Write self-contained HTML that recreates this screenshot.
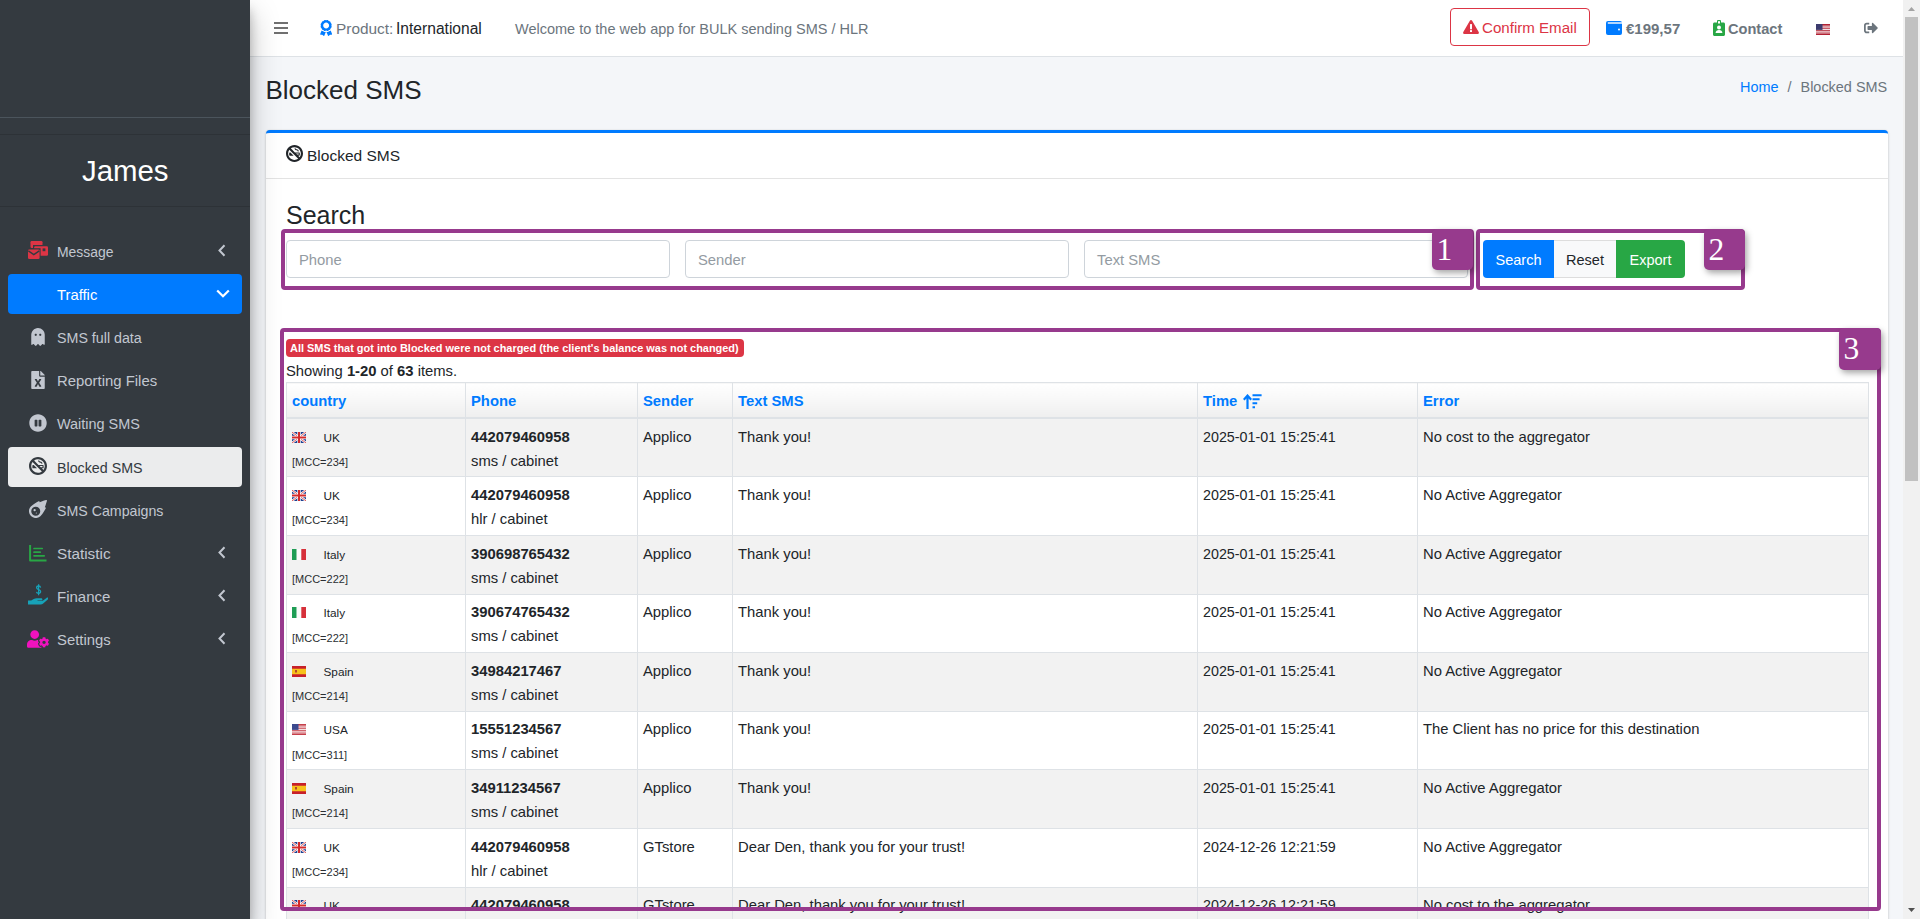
<!DOCTYPE html>
<html><head><meta charset="utf-8">
<style>
*{box-sizing:border-box;margin:0;padding:0}
html,body{width:1920px;height:919px;overflow:hidden}
body{font-family:"Liberation Sans",sans-serif;background:#f4f6f9;color:#212529;position:relative;font-size:14.8px}
.abs{position:absolute}
.nw{white-space:nowrap}
/* sidebar */
#sb{position:absolute;left:0;top:0;width:250px;height:919px;background:#343a40;box-shadow:0 14px 28px rgba(0,0,0,.25),0 10px 10px rgba(0,0,0,.22);z-index:5}
.sbline{position:absolute;left:0;width:250px;height:1px}
.nav{position:absolute;left:8px;width:234px;height:40px;border-radius:4px;color:#c2c7d0;font-size:14.2px}
.nav .ic{position:absolute;left:20px;top:10px;width:20px;height:20px}
.nav .tx{position:absolute;left:49px;top:12px;white-space:nowrap;line-height:18px}
.nav .ar{position:absolute;left:210px;top:13px;width:8px;height:13px}
/* header */
#hd{position:absolute;left:250px;top:0;width:1653px;height:57px;background:#fff;border-bottom:1px solid #dee2e6;z-index:3}
/* scrollbar */
#scr{position:absolute;left:1903px;top:0;width:17px;height:919px;background:#f1f1f1;z-index:10}
#thumb{position:absolute;left:2px;top:17px;width:13px;height:464px;background:#c1c1c1}
/* card */
#card{position:absolute;left:266px;top:130px;width:1622px;height:900px;background:#fff;border-radius:4px;border-top:3px solid #007bff;box-shadow:0 0 1px rgba(0,0,0,.125),0 1px 3px rgba(0,0,0,.2)}
.inp{position:absolute;top:240px;height:38px;width:384px;border:1px solid #ced4da;border-radius:4px;background:#fff;color:#939ba2;font-size:14.8px;padding:10.5px 0 0 12px}
.btn{position:absolute;top:240px;height:38px;font-size:14.5px;padding-top:12px;text-align:center}
/* table */
#tbl{position:absolute;left:286px;top:382px;border-collapse:collapse;table-layout:fixed;width:1582px;font-size:14.8px}
#tbl th,#tbl td{border:1px solid #dee2e6;padding:4.8px 5px;vertical-align:top;text-align:left;line-height:24px}
#tbl th{color:#007bff;font-weight:700;background:linear-gradient(to bottom,#fff 0%,#efefef 100%);border-bottom:2px solid #dee2e6;height:35.6px;padding-top:5.8px;padding-bottom:3.8px}
#tbl td{height:58.6px;padding-top:5.5px;padding-bottom:4.1px}
#tbl tr.s td{background:#f2f2f2}
#tbl tr.r1 td{height:57px;padding-bottom:3.9px}
.cty{font-size:11.8px;line-height:24px;position:relative;top:1px;height:24px}
.cty svg{vertical-align:-1px;margin-right:17.5px}
.mcc{font-size:11px;line-height:24px;position:relative;top:1.5px;height:24px;color:#2b2f33}
.tm{font-size:14.3px}
/* annotations */
.box{position:absolute;border:4px solid #973a8d;border-radius:4px;z-index:20}
.lab{position:absolute;width:41px;height:41px;background:#973a8d;border-radius:5px;color:#fff;font-family:"Liberation Serif",serif;font-size:31.5px;line-height:41.5px;padding-left:4.5px;box-shadow:2px 3px 6px rgba(0,0,0,.35);z-index:21}
</style></head>
<body>

<!-- SIDEBAR -->
<div id="sb">
  <div class="sbline" style="top:117px;background:#4b545c"></div>
  <div class="sbline" style="top:134px;background:#2d3237"></div>
  <div class="abs nw" style="left:82px;top:154px;color:#fff;font-size:29.4px;line-height:34px">James</div>
  <div class="sbline" style="top:206px;background:#2d3237"></div>

  <!-- nav items -->
  <div class="nav" style="top:231px">
    <svg class="abs" style="left:20px;top:10px" width="20" height="18" viewBox="0 0 20 18">
      <rect x="2.5" y="0" width="12" height="7" rx="1.2" fill="#dc3545"/>
      <rect x="5" y="4" width="16" height="12" fill="#343a40"/>
      <rect x="6.2" y="5.2" width="13.8" height="9.6" rx="1.2" fill="#dc3545"/>
      <rect x="14.6" y="7.4" width="2.8" height="2.8" fill="#343a40"/>
      <rect x="-1" y="7.2" width="13.6" height="12" fill="#343a40"/>
      <rect x="0" y="8.4" width="11.6" height="9.6" rx="1.2" fill="#dc3545"/>
      <polyline points="0.3,9.8 5.8,13.6 11.3,9.8" fill="none" stroke="#343a40" stroke-width="1.4"/>
    </svg>
    <div class="tx" style="font-size:13.95px">Message</div>
    <svg class="ar" style="left:210px" viewBox="0 0 8 13"><polyline points="6.5,1.2 1.5,6.5 6.5,11.8" fill="none" stroke="#c2c7d0" stroke-width="2"/></svg>
  </div>
  <div class="nav" style="top:274px;background:#007bff;color:#fff">
    <div class="tx" style="font-size:14.8px">Traffic</div>
    <svg class="abs" style="left:208px;top:15px" width="14" height="9" viewBox="0 0 14 9"><polyline points="1.2,1.5 7,7.2 12.8,1.5" fill="none" stroke="#fff" stroke-width="2.2"/></svg>
  </div>
  <div class="nav" style="top:317px">
    <svg class="abs" style="left:23px;top:11px" width="14" height="18" viewBox="0 0 384 512"><path fill="#c2c7d0" d="M186.1.09C81.01 3.24 0 94.92 0 200.05v263.92c0 14.26 17.23 21.39 27.31 11.31l24.92-18.53c6.66-4.95 16-3.99 21.51 2.21l42.95 48.35c6.25 6.25 16.38 6.25 22.63 0l40.72-45.85c6.37-7.17 17.56-7.17 23.92 0l40.72 45.85c6.25 6.25 16.38 6.25 22.63 0l42.95-48.35c5.51-6.2 14.85-7.17 21.51-2.21l24.92 18.53c10.08 10.08 27.31 2.94 27.31-11.31V192C384 84 294.83-3.17 186.1.09zM128 224c-17.67 0-32-14.33-32-32s14.33-32 32-32 32 14.33 32 32-14.33 32-32 32zm128 0c-17.67 0-32-14.33-32-32s14.33-32 32-32 32 14.33 32 32-14.33 32-32 32z"/></svg>
    <div class="tx" style="font-size:14.25px">SMS full data</div>
  </div>
  <div class="nav" style="top:360px">
    <svg class="abs" style="left:23px;top:11px" width="14" height="18" viewBox="0 0 384 512"><path fill="#c2c7d0" d="M224 136V0H24C10.7 0 0 10.7 0 24v464c0 13.3 10.7 24 24 24h336c13.3 0 24-10.7 24-24V160H248c-13.2 0-24-10.8-24-24zm60.1 106.5L224 336l60.1 93.5c5.1 8-.6 18.5-10.1 18.5h-34.9c-4.4 0-8.5-2.4-10.6-6.3C208.9 405.5 192 373 192 373c-6.4 14.8-10 20-36.6 68.8-2.1 3.9-6.1 6.3-10.5 6.3H110c-9.5 0-15.2-10.5-10.1-18.5l60.3-93.5-60.3-93.5c-5.2-8 .6-18.5 10.1-18.5h34.8c4.4 0 8.5 2.4 10.6 6.3 26.1 48.8 20 33.6 36.6 68.5 0 0 6.1-11.7 36.6-68.5 2.1-3.9 6.2-6.3 10.6-6.3H274c9.5-.1 15.2 10.4 10.1 18.4zM384 121.9v6.1H256V0h6.1c6.4 0 12.5 2.5 17 7l97.9 98c4.5 4.5 7 10.6 7 16.9z"/></svg>
    <div class="tx" style="font-size:14.9px">Reporting Files</div>
  </div>
  <div class="nav" style="top:403px">
    <svg class="abs" style="left:21px;top:11px" width="18" height="18" viewBox="0 0 512 512"><path fill="#c2c7d0" d="M256 8C119 8 8 119 8 256s111 248 248 248 248-111 248-248S393 8 256 8zm-16 328c0 8.8-7.2 16-16 16h-48c-8.8 0-16-7.2-16-16V176c0-8.8 7.2-16 16-16h48c8.8 0 16 7.2 16 16v160zm112 0c0 8.8-7.2 16-16 16h-48c-8.8 0-16-7.2-16-16V176c0-8.8 7.2-16 16-16h48c8.8 0 16 7.2 16 16v160z"/></svg>
    <div class="tx" style="font-size:14.45px">Waiting SMS</div>
  </div>
  <div class="nav" style="top:447px;background:#ebeced;color:#343a40">
    <svg class="abs" style="left:21px;top:10px" width="18" height="18" viewBox="0 0 512 512"><path fill="#343a40" d="M96 304c0 8.8 7.2 16 16 16h117.5l-96-96H112c-8.8 0-16 7.2-16 16v64zM256 0C114.6 0 0 114.6 0 256s114.6 256 256 256 256-114.6 256-256S397.4 0 256 0zm0 448c-105.9 0-192-86.1-192-192 0-41.4 13.3-79.700 35.7-111.1l267.4 267.4C335.7 434.7 297.4 448 256 448zm45.2-192H384v32h-50.8l-32-32zm111.1 111.1L365.2 320H400c8.8 0 16-7.2 16-16v-64c0-8.8-7.2-16-16-16H269.2L144.9 99.7C176.3 77.3 214.6 64 256 64c105.9 0 192 86.1 192 192 0 41.4-13.3 79.7-35.7 111.1zM320.6 128c-15.6 0-28.6-11.2-31.4-25.9-.7-3.6-4-6.1-7.7-6.1h-16.2c-5 0-8.7 4.5-8 9.4 4.6 30.9 31.2 54.6 63.3 54.6 15.6 0 28.6 11.2 31.4 25.9.7 3.6 4 6.1 7.7 6.1h16.2c5 0 8.7-4.5 8-9.4-4.6-30.9-31.2-54.6-63.3-54.6z"/></svg>
    <div class="tx" style="font-size:14.25px">Blocked SMS</div>
  </div>
  <div class="nav" style="top:490px">
    <svg class="abs" style="left:21px;top:10px" width="18" height="18" viewBox="0 0 512 512"><path fill="#c2c7d0" d="M511.328 20.8c-11.6 38.7-34.3 111.7-61.3 187.7 7 2.1 13.4 4 18.6 5.6a16.06 16.06 0 0 1 9.5 22.9c-22.1 42.3-82.7 152.8-142.5 214.4-1 1.1-2 2.5-3 3.5A194.83 194.83 0 1 1 57.085 179.41c1-1 2.4-2 3.5-3 61.6-59.9 172-120.4 214.4-142.5a16.06 16.06 0 0 1 22.9 9.5c1.6 5.1 3.5 11.6 5.6 18.6C379.35 35 452.43 12.3 491.13.71A16.18 16.18 0 0 1 511.328 20.8ZM319.951 320A127.98 127.98 0 1 0 191.97 448 127.98 127.98 0 0 0 319.951 320Zm-127.98-32a32 32 0 1 1-32-32 31.96 31.96 0 0 1 32 32Zm32 80a16 16 0 1 1-16-16 16.05 16.05 0 0 1 16 16Z"/></svg>
    <div class="tx" style="font-size:14.2px">SMS Campaigns</div>
  </div>
  <div class="nav" style="top:533px">
    <svg class="abs" style="left:21px;top:12px" width="18" height="17" viewBox="0 0 18 17">
      <path d="M1.1 0 V15.6 H17.5" fill="none" stroke="#28a745" stroke-width="2" stroke-linejoin="round"/>
      <path d="M5 3.5 H13.2 M5 7.2 H11.2 M5 10.8 H15.2" fill="none" stroke="#28a745" stroke-width="1.7" stroke-linecap="round"/>
    </svg>
    <div class="tx" style="font-size:15.3px">Statistic</div>
    <svg class="ar" style="left:210px" viewBox="0 0 8 13"><polyline points="6.5,1.2 1.5,6.5 6.5,11.8" fill="none" stroke="#c2c7d0" stroke-width="2"/></svg>
  </div>
  <div class="nav" style="top:576px">
    <svg class="abs" style="left:20px;top:7px" width="20" height="22" viewBox="0 0 20 22">
      <path d="M10.6 1.2 V12.2" stroke="#17a2b8" stroke-width="1.2"/>
      <path d="M12.6 4.6 C12.4 3.5 11.6 3 10.6 3 C9.4 3 8.6 3.7 8.6 4.8 C8.6 7 12.6 6.2 12.6 8.6 C12.6 9.8 11.7 10.4 10.6 10.4 C9.5 10.4 8.7 9.8 8.5 8.8" fill="none" stroke="#17a2b8" stroke-width="1.3"/>
      <path fill="#17a2b8" d="M0 17.6 h3.2 l2.5-1.6 c1-.6 2-.8 3-.8 h4.3 c.9 0 1.4.6 1.4 1.2 0 .7-.6 1.2-1.4 1.2 H9.5 v.5 h3.8 c.8 0 1.5-.3 2.1-.8 l3.1-2.4 c.6-.4 1.3-.4 1.6.1 .3.5.1 1.2-.3 1.5 l-4.6 4 c-.7.6-1.6 1-2.5 1 H0 Z"/>
    </svg>
    <div class="tx" style="font-size:15px">Finance</div>
    <svg class="ar" style="left:210px" viewBox="0 0 8 13"><polyline points="6.5,1.2 1.5,6.5 6.5,11.8" fill="none" stroke="#c2c7d0" stroke-width="2"/></svg>
  </div>
  <div class="nav" style="top:619px">
    <svg class="abs" style="left:19px;top:11px" width="22" height="18" viewBox="0 0 640 512"><path fill="#f012be" d="M610.5 373.3c2.6-14.1 2.6-28.5 0-42.6l25.8-14.9c3-1.7 4.3-5.2 3.3-8.5-6.7-21.6-18.2-41.2-33.2-57.4-2.3-2.5-6-3.1-9-1.4l-25.8 14.9c-10.9-9.3-23.4-16.5-36.9-21.3v-29.8c0-3.4-2.4-6.4-5.7-7.1-22.3-5-45-4.8-66.2 0-3.3.7-5.7 3.7-5.7 7.1v29.8c-13.5 4.8-26 12-36.9 21.3l-25.8-14.9c-2.9-1.7-6.7-1.1-9 1.4-15 16.2-26.5 35.8-33.2 57.4-1 3.3.4 6.8 3.3 8.5l25.8 14.9c-2.6 14.1-2.6 28.5 0 42.6l-25.8 14.9c-3 1.7-4.3 5.2-3.3 8.5 6.7 21.6 18.2 41.1 33.2 57.4 2.3 2.5 6 3.1 9 1.4l25.8-14.9c10.9 9.3 23.4 16.5 36.9 21.3v29.8c0 3.4 2.4 6.4 5.7 7.1 22.3 5 45 4.8 66.2 0 3.3-.7 5.7-3.7 5.7-7.1v-29.8c13.5-4.8 26-12 36.9-21.3l25.8 14.9c2.9 1.7 6.7 1.1 9-1.4 15-16.2 26.5-35.8 33.2-57.4 1-3.3-.4-6.8-3.300-8.5l-25.8-14.9zM496 400.5c-26.8 0-48.5-21.8-48.5-48.5s21.8-48.5 48.5-48.5 48.5 21.8 48.5 48.5-21.7 48.5-48.5 48.5zM224 256c70.7 0 128-57.3 128-128S294.7 0 224 0 96 57.3 96 128s57.3 128 128 128zm201.2 226.5c-2.3-1.2-4.6-2.6-6.8-3.9l-7.9 4.6c-6 3.4-12.8 5.3-19.6 5.3-10.9 0-21.4-4.6-28.9-12.6-18.3-19.8-32.3-43.9-40.2-69.6-5.5-17.7 1.9-36.4 17.9-45.7l7.9-4.6c-.1-2.6-.1-5.2 0-7.8l-7.9-4.6c-16-9.2-23.4-28-17.9-45.7.9-2.9 2.2-5.8 3.2-8.7-3.8-.3-7.5-1.2-11.4-1.2h-16.7c-22.2 10.2-46.9 16-72.9 16s-50.6-5.8-72.9-16h-16.7C60.2 288 0 348.2 0 422.4V464c0 26.5 21.5 48 48 48h352c12.2 0 23.2-4.8 31.7-12.5l-6.5-3z"/></svg>
    <div class="tx" style="font-size:14.85px">Settings</div>
    <svg class="ar" style="left:210px" viewBox="0 0 8 13"><polyline points="6.5,1.2 1.5,6.5 6.5,11.8" fill="none" stroke="#c2c7d0" stroke-width="2"/></svg>
  </div>
</div>

<!-- HEADER -->
<div id="hd">
  <svg class="abs" style="left:24px;top:21px" width="14" height="14" viewBox="0 0 14 14"><path d="M0 2H14M0 7H14M0 12H14" stroke="#707070" stroke-width="2"/></svg>
  <svg class="abs" style="left:70px;top:20px" width="12.3" height="16" viewBox="0 0 384 512"><path fill="#007bff" d="M97.12 362.63c-8.69-8.69-4.16-6.24-25.12-11.85-9.51-2.55-17.870-7.45-25.43-13.32L1.2 448.7c-4.39 10.77 3.81 22.47 15.43 22.03l52.69-2.01L105.56 507c8 8.44 22.04 5.81 26.43-4.96l52.05-127.62c-10.84 6.04-22.87 9.58-35.31 9.58-19.5 0-37.82-7.59-51.61-21.37zM382.8 448.7l-45.37-111.24c-7.56 5.88-15.92 10.77-25.43 13.32-21.07 5.64-16.45 3.18-25.12 11.85-13.79 13.78-32.12 21.37-51.62 21.37-12.44 0-24.47-3.55-35.31-9.58L252 502.04c4.39 10.77 18.44 13.4 26.43 4.96l36.25-38.28 52.69 2.01c11.62.44 19.82-11.27 15.43-22.03zM263 340c15.28-15.55 17.03-14.21 38.79-20.14 13.89-3.79 24.75-14.84 28.47-28.98 7.48-28.4 5.54-24.97 25.95-45.75 10.17-10.35 14.14-25.44 10.42-39.58-7.47-28.38-7.48-24.42 0-52.83 3.72-14.14-.25-29.23-10.42-39.58-20.41-20.78-18.47-17.36-25.95-45.75-3.72-14.14-14.58-25.19-28.47-28.98-27.88-7.61-24.52-5.62-44.95-26.41-10.17-10.35-25-14.4-38.89-10.61-27.87 7.6-23.98 7.61-51.9 0-13.89-3.79-28.72.25-38.89 10.61-20.41 20.79-17.05 18.8-44.94 26.41-13.89 3.79-24.75 14.84-28.47 28.98-7.47 28.39-5.54 24.97-25.95 45.75-10.17 10.35-14.15 25.44-10.42 39.58 7.47 28.36 7.48 24.4 0 52.82-3.72 14.14.25 29.23 10.42 39.59 20.41 20.78 18.47 17.35 25.95 45.75 3.72 14.14 14.58 25.19 28.47 28.98C104.6 325.96 106.27 325 121 340c13.23 13.47 33.84 15.88 49.74 5.820a39.676 39.676 0 0 1 42.53 0c15.89 10.06 36.5 7.65 49.73-5.82zM97.66 175.96c0-53.03 42.24-96.02 94.34-96.02s94.34 42.99 94.34 96.02-42.24 96.02-94.34 96.02-94.34-42.99-94.34-96.02z"/></svg>
  <div class="abs nw" style="left:86px;top:19px;font-size:15.4px;line-height:20px;color:#6c757d">Product:</div><div class="abs nw" style="left:146px;top:19px;font-size:15.6px;line-height:20px;color:#212529">International</div>
  <div class="abs nw" style="left:265px;top:19px;font-size:14.5px;line-height:20px;color:#6c757d">Welcome to the web app for BULK sending SMS / HLR</div>
  <div class="abs" style="left:1200px;top:8px;width:140px;height:38px;border:1px solid #dc3545;border-radius:4px"></div>
  <svg class="abs" style="left:1213px;top:20px" width="16" height="14" viewBox="0 0 576 512"><path fill="#dc3545" d="M569.517 440.013C587.975 472.007 564.806 512 527.94 512H48.054c-36.937 0-59.999-40.055-41.577-71.987L246.423 23.985c18.467-32.009 64.72-31.951 83.154 0l239.94 416.028z"/><rect x="252" y="150" width="72" height="190" fill="#fff"/><rect x="252" y="370" width="72" height="70" fill="#fff"/></svg>
  <div class="abs nw" style="left:1232px;top:18px;font-size:15.1px;line-height:20px;color:#dc3545">Confirm Email</div>
  <svg class="abs" style="left:1356px;top:21px" width="16" height="14" viewBox="0 0 16 14"><rect x="0" y="0" width="16" height="14" rx="2" fill="#007bff"/><rect x="1.8" y="1.3" width="14.2" height="1.4" fill="#fff"/><circle cx="13" cy="8.6" r="1" fill="#fff"/></svg>
  <div class="abs nw" style="left:1376px;top:19px;font-size:15px;line-height:20px;color:#6c757d;font-weight:700">€199,57</div>
  <svg class="abs" style="left:1463px;top:20px" width="12" height="16" viewBox="0 0 12 16"><path fill="#28a745" d="M1.5 2.5h2.5V1.2C4 .5 4.5 0 5.2 0h1.6C7.5 0 8 .5 8 1.2v1.3h2.5c.8 0 1.5.7 1.5 1.5V14.5c0 .8-.7 1.5-1.5 1.5h-9C.7 16 0 15.3 0 14.5V4c0-.8.7-1.5 1.5-1.5z"/><rect x="5" y="1.2" width="2" height="2.3" fill="#fff"/><circle cx="6" cy="7.5" r="2" fill="#fff"/><path d="M2.6 13c0-2 1.4-3.1 3.4-3.1s3.4 1.1 3.4 3.1z" fill="#fff"/></svg>
  <div class="abs nw" style="left:1478px;top:19px;font-size:14.6px;line-height:20px;color:#6c757d;font-weight:700">Contact</div>
  <svg class="abs" style="left:1566px;top:24px" width="14" height="11" viewBox="0 0 14 11"><rect width="14" height="11" fill="#b22234"/><rect y="1.7" width="14" height="0.85" fill="#fff"/><rect y="3.4" width="14" height="0.85" fill="#fff"/><rect y="5.1" width="14" height="0.85" fill="#fff"/><rect y="6.8" width="14" height="0.85" fill="#fff"/><rect y="8.5" width="14" height="0.85" fill="#fff"/><rect width="6.5" height="5.9" fill="#3c3b6e"/><rect x="0" y="10.2" width="14" height=".8" fill="#fff" opacity=".0"/></svg>
  <svg class="abs" style="left:1613px;top:21px" width="16" height="14" viewBox="0 0 512 512"><path fill="#6c757d" d="M497 273L329 441c-15 15-41 4.5-41-17v-96H152c-13.3 0-24-10.7-24-24v-96c0-13.3 10.7-24 24-24h136V88c0-21.4 25.9-32 41-17l168 168c9.3 9.4 9.3 24.6 0 34zM192 436v-40c0-6.6-5.4-12-12-12H96c-17.7 0-32-14.3-32-32V160c0-17.7 14.3-32 32-32h84c6.6 0 12-5.4 12-12V76c0-6.6-5.4-12-12-12H96c-53 0-96 43-96 96v192c0 53 43 96 96 96h84c6.6 0 12-5.4 12-12z"/></svg>
</div>

<!-- CONTENT HEADER -->
<div class="abs nw" style="left:265.5px;top:72.5px;font-size:26px;line-height:34px;color:#212529">Blocked SMS</div>
<div class="abs nw" style="left:1740px;top:77px;font-size:14.45px;line-height:20px;color:#6c757d"><span style="color:#007bff">Home</span><span style="padding:0 9px">/</span>Blocked SMS</div>

<!-- CARD -->
<div id="card"></div>
<svg class="abs" style="left:286px;top:145px;z-index:2" width="17" height="17" viewBox="0 0 512 512"><path fill="#212529" d="M96 304c0 8.8 7.2 16 16 16h117.5l-96-96H112c-8.8 0-16 7.2-16 16v64zM256 0C114.6 0 0 114.6 0 256s114.6 256 256 256 256-114.6 256-256S397.4 0 256 0zm0 448c-105.9 0-192-86.1-192-192 0-41.4 13.3-79.7 35.7-111.1l267.4 267.4C335.7 434.7 297.4 448 256 448zm45.2-192H384v32h-50.8l-32-32zm111.1 111.1L365.2 320H400c8.8 0 16-7.2 16-16v-64c0-8.8-7.2-16-16-16H269.2L144.9 99.7C176.3 77.3 214.6 64 256 64c105.900 0 192 86.1 192 192 0 41.4-13.3 79.7-35.7 111.1zM320.6 128c-15.6 0-28.6-11.2-31.4-25.9-.7-3.6-4-6.1-7.7-6.1h-16.2c-5 0-8.7 4.5-8 9.4 4.6 30.9 31.2 54.6 63.3 54.6 15.6 0 28.6 11.2 31.4 25.9.7 3.6 4 6.1 7.7 6.1h16.2c5 0 8.7-4.5 8-9.4-4.6-30.9-31.2-54.6-63.3-54.6z"/></svg>
<div class="abs nw" style="left:307px;top:145.5px;font-size:15.5px;line-height:20px;z-index:2">Blocked SMS</div>
<div class="abs" style="left:266px;top:178px;width:1622px;height:1px;background:#e3e3e3;z-index:2"></div>
<div class="abs nw" style="left:286px;top:199px;font-size:25px;line-height:32px;z-index:2">Search</div>
<div class="inp" style="left:286px;z-index:2">Phone</div>
<div class="inp" style="left:685px;z-index:2">Sender</div>
<div class="inp" style="left:1084px;z-index:2">Text SMS</div>
<div class="btn" style="left:1483px;width:71px;background:#007bff;color:#fff;border-radius:4px 0 0 4px;z-index:2">Search</div>
<div class="btn" style="left:1554px;width:62px;background:#f8f9fa;color:#212529;border-top:1px solid #ddd;border-bottom:1px solid #ddd;padding-top:11px;z-index:2">Reset</div>
<div class="btn" style="left:1616px;width:69px;background:#28a745;color:#fff;border-radius:0 4px 4px 0;z-index:2">Export</div>
<div class="abs nw" style="left:286px;top:339px;height:18px;width:458px;background:#dc3545;color:#fff;border-radius:4px;font-size:10.95px;font-weight:700;line-height:18px;padding-left:4px;z-index:2">All SMS that got into Blocked were not charged (the client's balance was not changed)</div>
<div class="abs nw" style="left:286px;top:361px;font-size:14.8px;line-height:20px;z-index:2">Showing <b>1-20</b> of <b>63</b> items.</div>
<table id="tbl" style="z-index:2">
<colgroup><col style="width:179px"><col style="width:172px"><col style="width:95px"><col style="width:465px"><col style="width:220px"><col style="width:451px"></colgroup>
<tr><th>country</th><th>Phone</th><th>Sender</th><th>Text SMS</th><th>Time<svg width="19" height="15" viewBox="0 0 19 15" style="vertical-align:-3px;margin-left:6px"><path d="M4.5 15V2.2M0.8 5.8L4.5 1.6 8.2 5.8" fill="none" stroke="#007bff" stroke-width="2.2"/><path d="M9.5 1.2H18.6M9.5 5.2H16.6M9.5 9.2H14.2M9.5 13.2H12" stroke="#007bff" stroke-width="2"/></svg></th><th>Error</th></tr>
<tr class="s r1"><td><div class="cty"><svg width="14" height="11" viewBox="0 0 14 11"><rect width="14" height="11" fill="#1d3f8f"/><path d="M0 0L14 11M14 0L0 11" stroke="#fff" stroke-width="2.2"/><path d="M0 0L14 11M14 0L0 11" stroke="#d52b2b" stroke-width=".8"/><path d="M7 0V11M0 5.5H14" stroke="#fff" stroke-width="3.4"/><path d="M7 0V11M0 5.5H14" stroke="#d52b2b" stroke-width="2"/></svg>UK</div><div class="mcc">[MCC=234]</div></td><td><b>442079460958</b><br>sms / cabinet</td><td>Applico</td><td>Thank you!</td><td class="tm">2025-01-01 15:25:41</td><td>No cost to the aggregator</td></tr>
<tr><td><div class="cty"><svg width="14" height="11" viewBox="0 0 14 11"><rect width="14" height="11" fill="#1d3f8f"/><path d="M0 0L14 11M14 0L0 11" stroke="#fff" stroke-width="2.2"/><path d="M0 0L14 11M14 0L0 11" stroke="#d52b2b" stroke-width=".8"/><path d="M7 0V11M0 5.5H14" stroke="#fff" stroke-width="3.4"/><path d="M7 0V11M0 5.5H14" stroke="#d52b2b" stroke-width="2"/></svg>UK</div><div class="mcc">[MCC=234]</div></td><td><b>442079460958</b><br>hlr / cabinet</td><td>Applico</td><td>Thank you!</td><td class="tm">2025-01-01 15:25:41</td><td>No Active Aggregator</td></tr>
<tr class="s"><td><div class="cty"><svg width="14" height="11" viewBox="0 0 14 11"><rect width="4.7" height="11" fill="#1f9d55"/><rect x="4.7" width="4.6" height="11" fill="#fbfbfb"/><rect x="9.3" width="4.7" height="11" fill="#d6303a"/></svg>Italy</div><div class="mcc">[MCC=222]</div></td><td><b>390698765432</b><br>sms / cabinet</td><td>Applico</td><td>Thank you!</td><td class="tm">2025-01-01 15:25:41</td><td>No Active Aggregator</td></tr>
<tr><td><div class="cty"><svg width="14" height="11" viewBox="0 0 14 11"><rect width="4.7" height="11" fill="#1f9d55"/><rect x="4.7" width="4.6" height="11" fill="#fbfbfb"/><rect x="9.3" width="4.7" height="11" fill="#d6303a"/></svg>Italy</div><div class="mcc">[MCC=222]</div></td><td><b>390674765432</b><br>sms / cabinet</td><td>Applico</td><td>Thank you!</td><td class="tm">2025-01-01 15:25:41</td><td>No Active Aggregator</td></tr>
<tr class="s"><td><div class="cty"><svg width="14" height="11" viewBox="0 0 14 11"><rect width="14" height="11" fill="#c8202a"/><rect y="2.75" width="14" height="5.5" fill="#f7c21b"/><rect x="3" y="4" width="2" height="2.5" fill="#b5472a"/></svg>Spain</div><div class="mcc">[MCC=214]</div></td><td><b>34984217467</b><br>sms / cabinet</td><td>Applico</td><td>Thank you!</td><td class="tm">2025-01-01 15:25:41</td><td>No Active Aggregator</td></tr>
<tr><td><div class="cty"><svg width="14" height="11" viewBox="0 0 14 11"><rect width="14" height="11" fill="#c63f4a"/><rect y="1.7" width="14" height="0.85" fill="#fff"/><rect y="3.4" width="14" height="0.85" fill="#fff"/><rect y="5.1" width="14" height="0.85" fill="#fff"/><rect y="6.8" width="14" height="0.85" fill="#fff"/><rect y="8.5" width="14" height="0.85" fill="#fff"/><rect width="6.5" height="5.9" fill="#3c4a8e"/></svg>USA</div><div class="mcc">[MCC=311]</div></td><td><b>15551234567</b><br>sms / cabinet</td><td>Applico</td><td>Thank you!</td><td class="tm">2025-01-01 15:25:41</td><td>The Client has no price for this destination</td></tr>
<tr class="s"><td><div class="cty"><svg width="14" height="11" viewBox="0 0 14 11"><rect width="14" height="11" fill="#c8202a"/><rect y="2.75" width="14" height="5.5" fill="#f7c21b"/><rect x="3" y="4" width="2" height="2.5" fill="#b5472a"/></svg>Spain</div><div class="mcc">[MCC=214]</div></td><td><b>34911234567</b><br>sms / cabinet</td><td>Applico</td><td>Thank you!</td><td class="tm">2025-01-01 15:25:41</td><td>No Active Aggregator</td></tr>
<tr><td><div class="cty"><svg width="14" height="11" viewBox="0 0 14 11"><rect width="14" height="11" fill="#1d3f8f"/><path d="M0 0L14 11M14 0L0 11" stroke="#fff" stroke-width="2.2"/><path d="M0 0L14 11M14 0L0 11" stroke="#d52b2b" stroke-width=".8"/><path d="M7 0V11M0 5.5H14" stroke="#fff" stroke-width="3.4"/><path d="M7 0V11M0 5.5H14" stroke="#d52b2b" stroke-width="2"/></svg>UK</div><div class="mcc">[MCC=234]</div></td><td><b>442079460958</b><br>hlr / cabinet</td><td>GTstore</td><td>Dear Den, thank you for your trust!</td><td class="tm">2024-12-26 12:21:59</td><td>No Active Aggregator</td></tr>
<tr class="s"><td><div class="cty"><svg width="14" height="11" viewBox="0 0 14 11"><rect width="14" height="11" fill="#1d3f8f"/><path d="M0 0L14 11M14 0L0 11" stroke="#fff" stroke-width="2.2"/><path d="M0 0L14 11M14 0L0 11" stroke="#d52b2b" stroke-width=".8"/><path d="M7 0V11M0 5.5H14" stroke="#fff" stroke-width="3.4"/><path d="M7 0V11M0 5.5H14" stroke="#d52b2b" stroke-width="2"/></svg>UK</div><div class="mcc">[MCC=234]</div></td><td><b>442079460958</b><br>sms / cabinet</td><td>GTstore</td><td>Dear Den, thank you for your trust!</td><td class="tm">2024-12-26 12:21:59</td><td>No cost to the aggregator</td></tr>
</table>
<!-- annotations -->
<div class="box" style="left:281px;top:229px;width:1193px;height:61px"></div>
<div class="lab" style="left:1432px;top:229px">1</div>
<div class="box" style="left:1476px;top:229px;width:269px;height:61px"></div>
<div class="lab" style="left:1704px;top:229px">2</div>
<div class="box" style="left:280px;top:328px;width:1601px;height:583px"></div>
<div class="lab" style="left:1839px;top:328px;width:42px;height:42px">3</div>

<!-- SCROLLBAR -->
<div id="scr"><div id="thumb"></div>
<svg class="abs" style="left:5px;top:7px" width="7" height="4" viewBox="0 0 7 4"><path d="M0 4L3.5 0 7 4Z" fill="#a3a3a3"/></svg>
<svg class="abs" style="left:5px;top:908px" width="7" height="4" viewBox="0 0 7 4"><path d="M0 0L3.5 4 7 0Z" fill="#505050"/></svg>
</div>

</body></html>
